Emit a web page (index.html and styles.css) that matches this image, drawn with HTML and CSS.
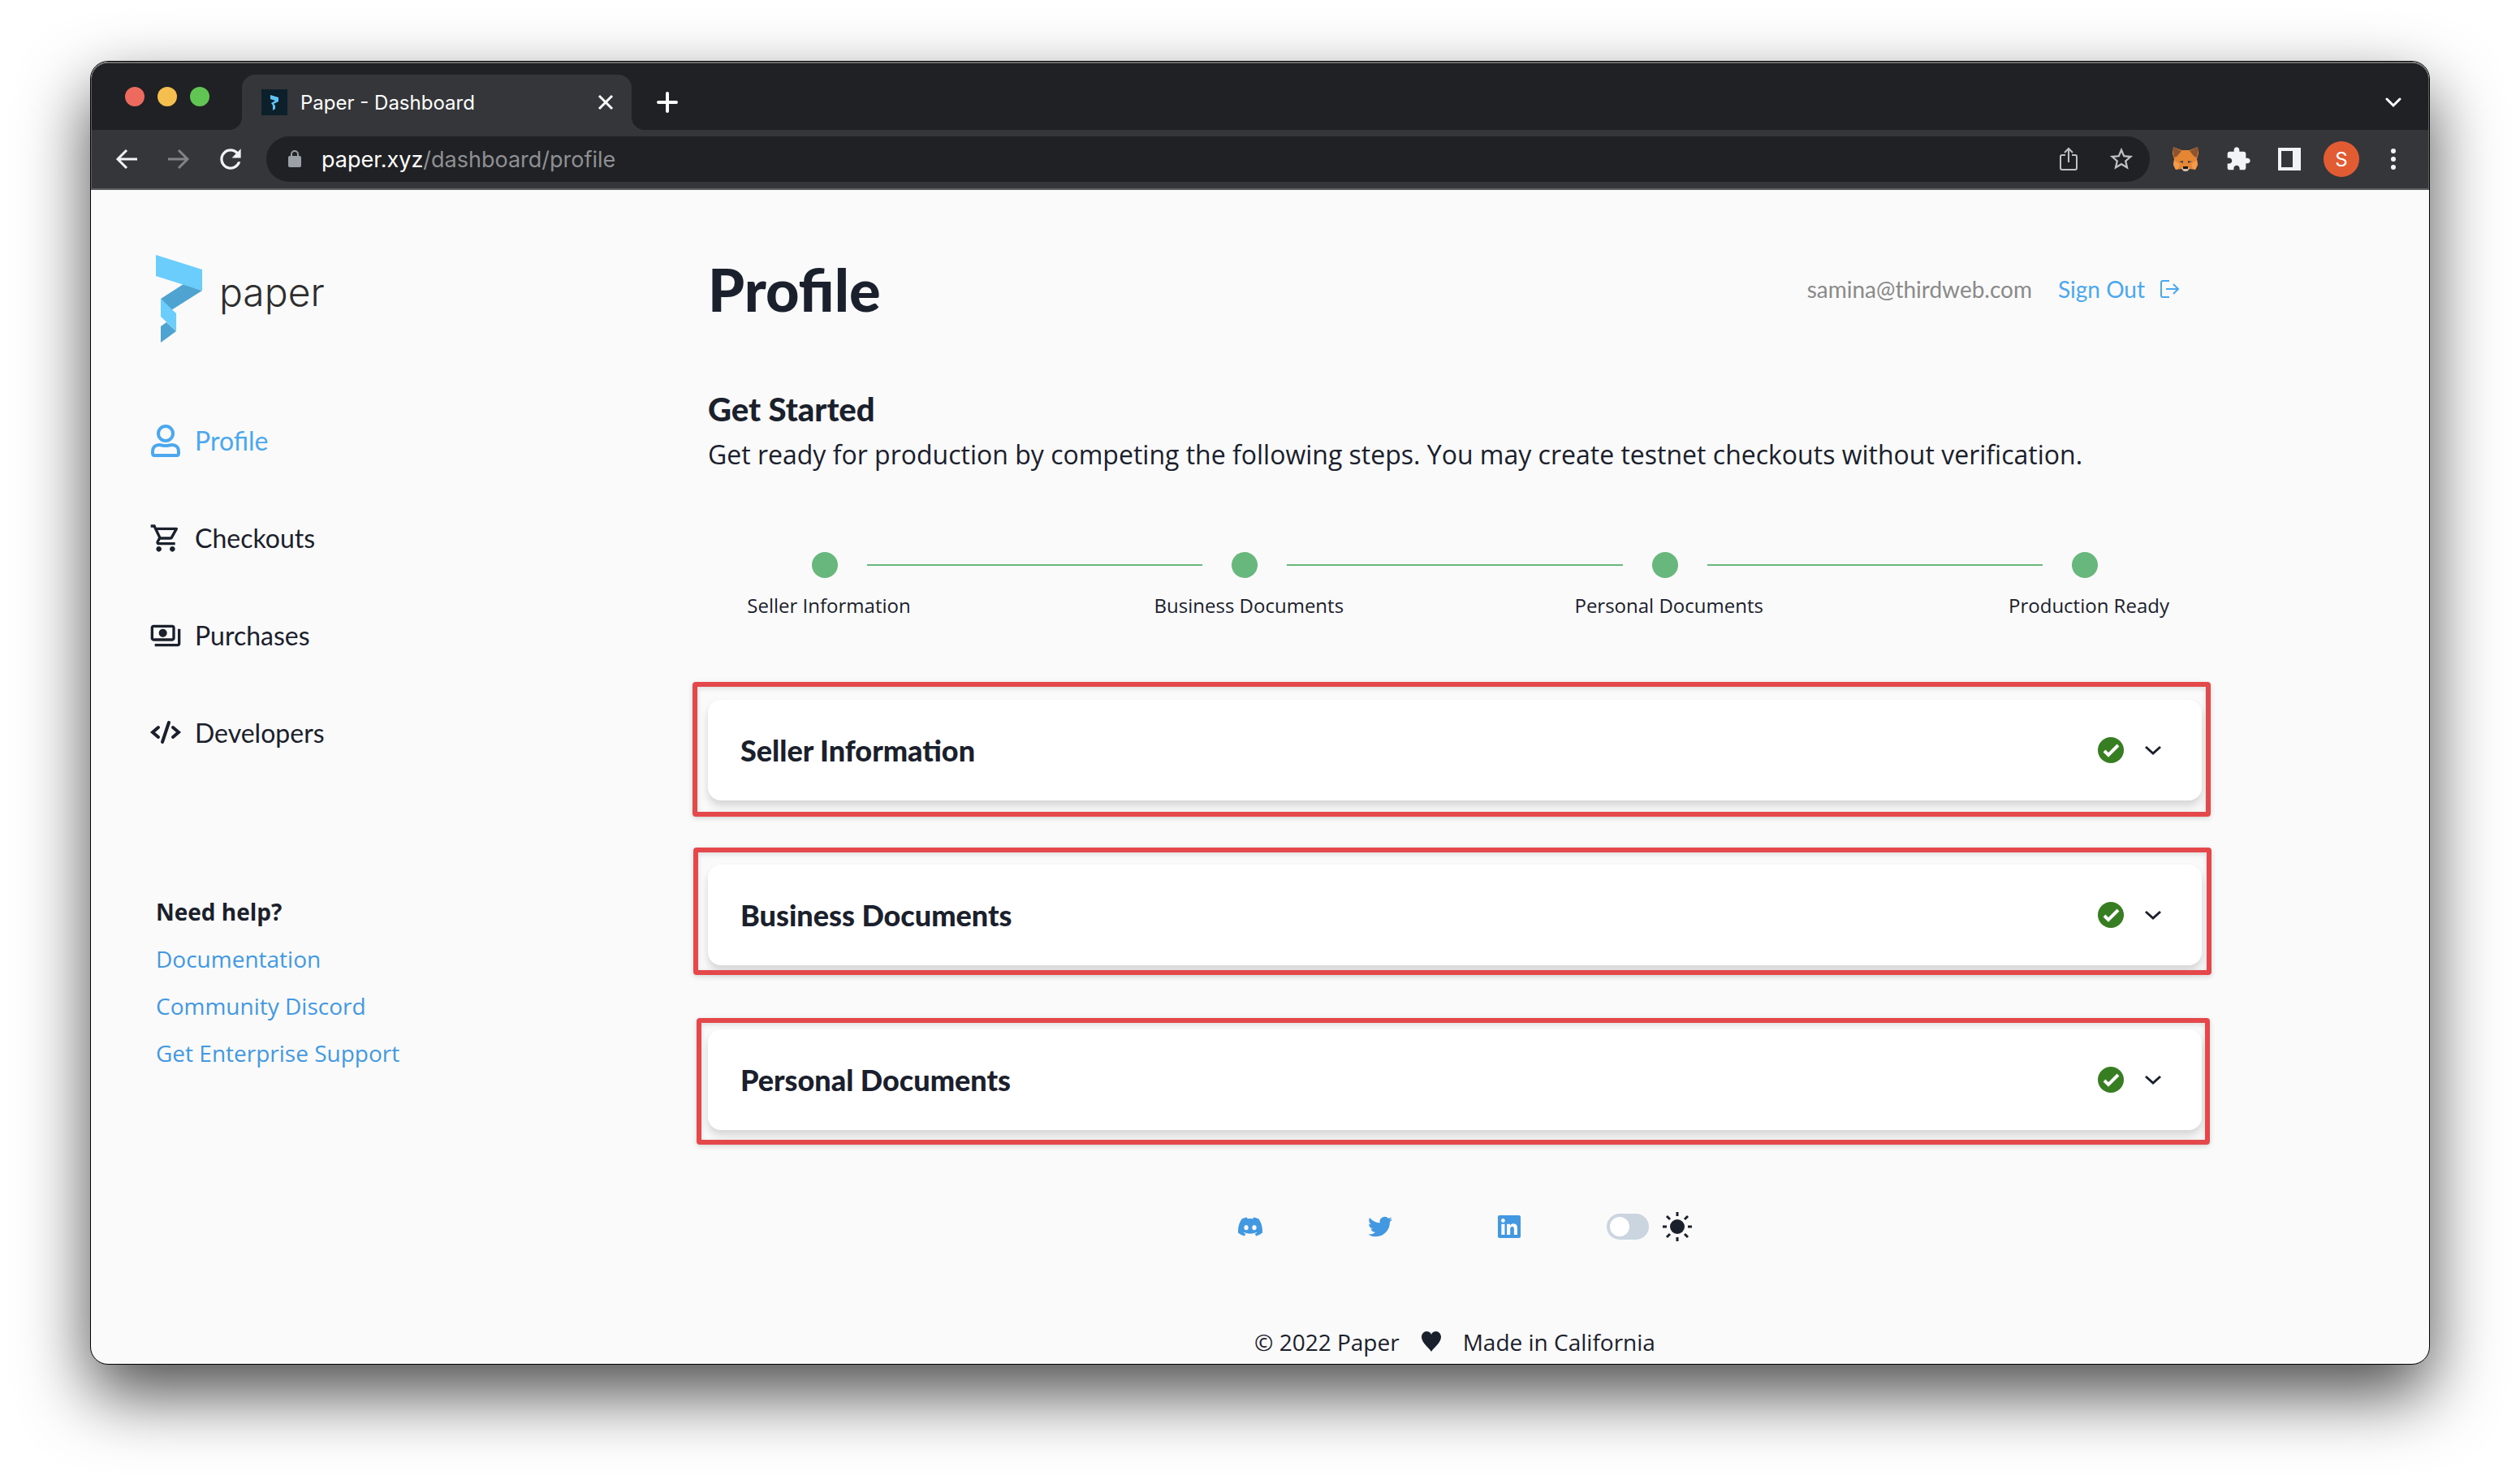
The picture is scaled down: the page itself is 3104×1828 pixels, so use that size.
FILE: index.html
```html
<!DOCTYPE html>
<html lang="en">
<head>
<meta charset="utf-8">
<title>Paper - Dashboard</title>
<link rel="stylesheet" href="styles.css">
</head>
<body>
<div class="window">
  <header class="chrome">
    <div class="tabstrip">
      <div class="lights">
        <button class="light light-close" aria-label="Close window"></button>
        <button class="light light-min" aria-label="Minimize window"></button>
        <button class="light light-max" aria-label="Zoom window"></button>
      </div>
      <div class="tab">
        <svg class="favicon" viewBox="0 0 32 32" aria-hidden="true"><rect width="32" height="32" fill="#0b202b"/><path d="M11 7l10 3v5l-6 3 2 2v4l-3 2v-6l-2-3 5-3-6-2z" fill="#5fc4f7"/></svg>
        <span class="tab-title">Paper - Dashboard</span>
        <button class="icon-btn" aria-label="Close tab"><svg width="20" height="20" viewBox="0 0 20 20"><path d="M2 2l16 16M18 2L2 18" stroke="#fff" stroke-width="3" fill="none"/></svg></button>
      </div>
      <button class="icon-btn new-tab" aria-label="New tab"><svg width="26" height="26" viewBox="0 0 26 26"><path d="M13 2v22M2 13h22" stroke="#fff" stroke-width="4" stroke-linecap="round"/></svg></button>
      <button class="icon-btn tab-search" aria-label="Search tabs"><svg width="20" height="14" viewBox="0 0 20 14"><path d="M2 3l8 8 8-8" stroke="#fff" stroke-width="3" fill="none" stroke-linecap="round"/></svg></button>
    </div>
    <div class="toolbar">
      <button class="icon-btn" aria-label="Back"><svg width="32" height="32" viewBox="0 0 32 32"><path d="M28 16H5M15 5L4 16l11 11" stroke="#f1f3f4" stroke-width="3" fill="none"/></svg></button>
      <button class="icon-btn" aria-label="Forward"><svg width="32" height="32" viewBox="0 0 32 32"><path d="M4 16h23M17 5l11 11-11 11" stroke="#828386" stroke-width="3" fill="none"/></svg></button>
      <button class="icon-btn" aria-label="Reload"><svg width="38" height="38" viewBox="0 0 24 24"><path d="M17.65 6.35A7.96 7.96 0 0012 4a8 8 0 107.73 10h-2.08A6 6 0 1112 6c1.66 0 3.14.69 4.22 1.78L13 11h7V4l-2.35 2.35z" fill="#f1f3f4"/></svg></button>
      <div class="omnibox">
        <svg class="lock" width="18" height="24" viewBox="0 0 18 24" aria-hidden="true"><rect x="1" y="8" width="16" height="14" rx="2" fill="#9aa0a6"/><path d="M5 9V6a4 4 0 018 0v3" stroke="#9aa0a6" stroke-width="2" fill="none"/></svg>
        <div class="url">paper.xyz<span class="url-path">/dashboard/profile</span></div>
        <button class="icon-btn" aria-label="Share"><svg width="32" height="32" viewBox="0 0 32 32"><path d="M12 11H8a2 2 0 00-2 2v14a2 2 0 002 2h16a2 2 0 002-2V13a2 2 0 00-2-2h-4M16 20V4M11 8l5-5 5 5" stroke="#bdc1c6" stroke-width="2" fill="none"/></svg></button>
        <button class="icon-btn" aria-label="Bookmark"><svg width="34" height="34" viewBox="0 0 24 24"><path d="M22 9.24l-7.19-.62L12 2 9.19 8.63 2 9.24l5.46 4.73L5.82 21 12 17.27 18.18 21l-1.63-7.03L22 9.24zM12 15.4l-3.76 2.27 1-4.28-3.32-2.88 4.38-.38L12 6.1l1.71 4.04 4.38.38-3.32 2.88 1 4.28L12 15.4z" fill="#bdc1c6"/></svg></button>
      </div>
      <div class="extensions">
        <button class="icon-btn" aria-label="MetaMask"><svg width="32" height="32" viewBox="0 0 32 32"><path d="M1 1l10 4h10l10-4 1 8-2 7 1 7-3 6-7-1-3 3h-4l-3-3-7 1-3-6 1-7L0 9z" fill="#e58635"/><path d="M1 1l10 5-6 7-3 1-1-5zM31 1l-10 5 6 7 3 1 1-5z" fill="#8c5430"/><path d="M2 17l7 5-2 6-3 1-3-6zM30 17l-7 5 2 6 3 1 3-6z" fill="#f29b4b"/><path d="M8 19l5-1v3zM24 19l-5-1v3z" fill="#40434a"/><path d="M11 27l3-1h4l3 1-3 4h-4z" fill="#cfbeb1"/><path d="M13 25h6v3h-6z" fill="#161616"/></svg></button>
        <button class="icon-btn" aria-label="Extensions"><svg width="32" height="32" viewBox="0 0 24 24"><path d="M20.500 11H19V7c0-1.100-.900-2-2-2h-4V3.500C13 2.120 11.880 1 10.500 1S8 2.120 8 3.500V5H4c-1.100 0-1.990.900-1.990 2v3.800H3.500c1.490 0 2.700 1.210 2.700 2.700s-1.210 2.700-2.700 2.700H2V20c0 1.100.900 2 2 2h3.800v-1.500c0-1.490 1.210-2.700 2.700-2.700 1.490 0 2.700 1.210 2.700 2.700V22H17c1.100 0 2-.900 2-2v-4h1.500c1.380 0 2.500-1.120 2.500-2.500S21.880 11 20.500 11z" fill="#f1f3f4"/></svg></button>
        <button class="icon-btn" aria-label="Side panel"><svg width="28" height="28" viewBox="0 0 28 28"><path d="M0 0h28v28H0zM4 4v20h14V4z" fill="#f1f3f4" fill-rule="evenodd"/></svg></button>
        <button class="avatar" aria-label="Account">S</button>
        <button class="icon-btn" aria-label="Menu"><svg width="8" height="28" viewBox="0 0 8 28"><g fill="#f1f3f4"><circle cx="4" cy="4" r="3"/><circle cx="4" cy="14" r="3"/><circle cx="4" cy="24" r="3"/></g></svg></button>
      </div>
    </div>
  </header>

  <div class="page">
    <aside class="sidebar">
      <a class="logo" href="#">
        <svg width="58" height="110" viewBox="0 0 58 110" aria-hidden="true"><path d="M34 36l23 8-38 24-13-14z" fill="#4fa3d1"/><path d="M0 0l57 18v26L0 26z" fill="#6bcdfb"/><path d="M13 83l12 11-19 14V88z" fill="#4fa3d1"/><path d="M6 54l19 18v22L6 76z" fill="#6bcdfb"/></svg>
        <span class="logo-text">paper</span>
      </a>
      <nav class="nav" aria-label="Main">
        <a class="nav-link nav-active" href="#"><svg width="40" height="44" viewBox="0 0 40 44" aria-hidden="true"><g fill="none" stroke="currentColor" stroke-width="4"><circle cx="20" cy="13" r="9"/><path d="M6 40h28c2 0 2-1 2-3v-2c0-5-3-8-8-8-3 0-4 1-8 1s-5-1-8-1c-5 0-8 3-8 8v2c0 2 0 3 2 3z"/></g></svg>Profile</a>
        <a class="nav-link" href="#"><svg width="40" height="40" viewBox="0 0 24 24" aria-hidden="true"><path fill="currentColor" d="M15.550 13c.750 0 1.410-.410 1.750-1.030l3.580-6.490A.996.996 0 0020.010 4H5.210l-.940-2H1v2h2l3.600 7.590-1.350 2.440C4.520 15.370 5.480 17 7 17h12v-2H7l1.100-2h7.450zM6.160 6h12.150l-2.760 5H8.530L6.160 6zM7 18c-1.100 0-1.990.900-1.990 2S5.900 22 7 22s2-.900 2-2-.900-2-2-2zm10 0c-1.100 0-1.990.900-1.990 2s.890 2 1.990 2 2-.900 2-2-.900-2-2-2z"/></svg>Checkouts</a>
        <a class="nav-link" href="#"><svg width="40" height="40" viewBox="0 0 24 24" aria-hidden="true"><path fill="currentColor" d="M19 14V6c0-1.100-.900-2-2-2H3c-1.100 0-2 .900-2 2v8c0 1.100.900 2 2 2h14c1.100 0 2-.900 2-2zm-2 0H3V6h14v8zm-7-7c-1.660 0-3 1.340-3 3s1.340 3 3 3 3-1.340 3-3-1.340-3-3-3zm13 0v11c0 1.100-.900 2-2 2H4v-2h17V7h2z"/></svg>Purchases</a>
        <a class="nav-link" href="#"><svg width="40" height="40" viewBox="0 0 40 40" aria-hidden="true"><path d="M11 13l-7 6 7 6M29 13l7 6-7 6M24 7l-8 24" fill="none" stroke="currentColor" stroke-width="4" stroke-linecap="round"/></svg>Developers</a>
      </nav>
      <section class="help">
        <h2 class="help-title">Need help?</h2>
        <a class="help-link" href="#">Documentation</a>
        <a class="help-link" href="#">Community Discord</a>
        <a class="help-link" href="#">Get Enterprise Support</a>
      </section>
    </aside>

    <div class="content">
      <main>
        <div class="page-head">
          <h1 class="title">Profile</h1>
          <div class="account">
            <span class="email">samina@thirdweb.com</span>
            <a class="signout" href="#">Sign Out<svg width="26" height="24" viewBox="0 0 26 24" aria-hidden="true"><path d="M12 2H4a2 2 0 00-2 2v16a2 2 0 002 2h8M8 12h15M17 6l6 6-6 6" fill="none" stroke="currentColor" stroke-width="2"/></svg></a>
          </div>
        </div>
        <h2 class="subtitle">Get Started</h2>
        <p class="lead">Get ready for production by competing the following steps. You may create testnet checkouts without verification.</p>
        <ol class="steps">
          <li class="step"><span class="dot"></span><span class="step-label">Seller Information</span></li>
          <li class="step-line" aria-hidden="true"></li>
          <li class="step"><span class="dot"></span><span class="step-label">Business Documents</span></li>
          <li class="step-line" aria-hidden="true"></li>
          <li class="step"><span class="dot"></span><span class="step-label">Personal Documents</span></li>
          <li class="step-line" aria-hidden="true"></li>
          <li class="step"><span class="dot"></span><span class="step-label">Production Ready</span></li>
        </ol>
        <div class="cards">
          <div class="card-wrap">
            <button class="card" aria-expanded="false">Seller Information<span class="card-icons"><svg width="32" height="32" viewBox="0 0 32 32" aria-label="Complete"><circle cx="16" cy="16" r="16" fill="#377d22"/><path d="M8 17l5 5 12-12" fill="none" stroke="#fff" stroke-width="4"/></svg><svg width="20" height="14" viewBox="0 0 20 14" aria-hidden="true"><path d="M1 3l9 8 9-8" fill="none" stroke="currentColor" stroke-width="3"/></svg></span></button>
            <span class="mark mark-seller"></span>
          </div>
          <div class="card-wrap">
            <button class="card" aria-expanded="false">Business Documents<span class="card-icons"><svg width="32" height="32" viewBox="0 0 32 32" aria-label="Complete"><circle cx="16" cy="16" r="16" fill="#377d22"/><path d="M8 17l5 5 12-12" fill="none" stroke="#fff" stroke-width="4"/></svg><svg width="20" height="14" viewBox="0 0 20 14" aria-hidden="true"><path d="M1 3l9 8 9-8" fill="none" stroke="currentColor" stroke-width="3"/></svg></span></button>
            <span class="mark mark-business"></span>
          </div>
          <div class="card-wrap">
            <button class="card" aria-expanded="false">Personal Documents<span class="card-icons"><svg width="32" height="32" viewBox="0 0 32 32" aria-label="Complete"><circle cx="16" cy="16" r="16" fill="#377d22"/><path d="M8 17l5 5 12-12" fill="none" stroke="#fff" stroke-width="4"/></svg><svg width="20" height="14" viewBox="0 0 20 14" aria-hidden="true"><path d="M1 3l9 8 9-8" fill="none" stroke="currentColor" stroke-width="3"/></svg></span></button>
            <span class="mark mark-personal"></span>
          </div>
        </div>
      </main>
      <footer class="footer">
        <div class="social">
          <a class="social-link" href="#" aria-label="Discord"><svg width="30" height="30" viewBox="0 0 24 24"><path fill="currentColor" d="M20.317 4.370a19.790 19.790 0 0 0-4.885-1.515.074.074 0 0 0-.079.037c-.210.375-.444.864-.608 1.250a18.270 18.270 0 0 0-5.487 0 12.640 12.640 0 0 0-.617-1.250.077.077 0 0 0-.079-.037A19.736 19.736 0 0 0 3.677 4.370a.070.070 0 0 0-.032.027C.533 9.046-.320 13.580.099 18.057a.082.082 0 0 0 .031.057 19.900 19.900 0 0 0 5.993 3.030.078.078 0 0 0 .084-.028 14.090 14.090 0 0 0 1.226-1.994.076.076 0 0 0-.041-.106 13.107 13.107 0 0 1-1.872-.892.077.077 0 0 1-.008-.128c.126-.094.252-.192.372-.291a.074.074 0 0 1 .077-.010c3.928 1.793 8.180 1.793 12.062 0a.074.074 0 0 1 .078.010c.120.098.246.198.373.292a.077.077 0 0 1-.006.127 12.299 12.299 0 0 1-1.873.892.077.077 0 0 0-.041.107c.360.698.772 1.362 1.225 1.993a.076.076 0 0 0 .084.028 19.839 19.839 0 0 0 6.002-3.030.077.077 0 0 0 .032-.054c.500-5.177-.838-9.674-3.549-13.660a.061.061 0 0 0-.031-.030zM8.020 15.330c-1.183 0-2.157-1.085-2.157-2.419 0-1.333.956-2.419 2.157-2.419 1.210 0 2.176 1.096 2.157 2.420 0 1.333-.956 2.418-2.157 2.418zm7.975 0c-1.183 0-2.157-1.085-2.157-2.419 0-1.333.955-2.419 2.157-2.419 1.210 0 2.176 1.096 2.157 2.420 0 1.333-.946 2.418-2.157 2.418z"/></svg></a>
          <a class="social-link" href="#" aria-label="Twitter"><svg width="30" height="30" viewBox="0 0 24 24"><path fill="currentColor" d="M23.953 4.570a10 10 0 0 1-2.825.775 4.958 4.958 0 0 0 2.163-2.723c-.951.555-2.005.959-3.127 1.184a4.920 4.920 0 0 0-8.384 4.482C7.690 8.095 4.067 6.130 1.640 3.162a4.822 4.822 0 0 0-.666 2.475c0 1.710.870 3.213 2.188 4.096a4.904 4.904 0 0 1-2.228-.616v.060a4.923 4.923 0 0 0 3.946 4.827 4.996 4.996 0 0 1-2.212.085 4.936 4.936 0 0 0 4.604 3.417 9.867 9.867 0 0 1-6.102 2.105c-.390 0-.779-.023-1.170-.067a13.995 13.995 0 0 0 7.557 2.209c9.053 0 13.998-7.496 13.998-13.985 0-.210 0-.420-.015-.630A9.935 9.935 0 0 0 24 4.590z"/></svg></a>
          <a class="social-link" href="#" aria-label="LinkedIn"><svg width="28" height="32" viewBox="0 0 448 512"><path fill="currentColor" d="M416 32H31.900C14.300 32 0 46.500 0 64.300v383.400C0 465.500 14.300 480 31.900 480H416c17.600 0 32-14.500 32-32.300V64.300c0-17.800-14.400-32.300-32-32.300zM135.400 416H69V202.200h66.500V416zm-33.200-243c-21.300 0-38.500-17.300-38.500-38.500S80.900 96 102.200 96c21.200 0 38.500 17.300 38.500 38.500 0 21.300-17.200 38.500-38.500 38.500zm282.100 243h-66.400V312c0-24.800-.5-56.700-34.500-56.700-34.600 0-39.900 27-39.900 54.900V416h-66.400V202.200h63.700v29.200h.9c8.900-16.800 30.600-34.500 62.900-34.500 67.200 0 79.700 44.300 79.700 101.900V416z"/></svg></a>
          <label class="theme"><input class="switch" type="checkbox" aria-label="Dark mode"><svg width="36" height="36" viewBox="0 0 36 36" aria-hidden="true"><circle cx="18" cy="18" r="9" fill="currentColor"/><path d="M18 0v5M18 31v5M0 18h5M31 18h5M5 5l4 4M27 27l4 4M31 5l-4 4M9 27l-4 4" stroke="currentColor" stroke-width="3"/></svg></label>
        </div>
        <p class="legal"><span>© 2022 Paper</span><svg width="24" height="26" viewBox="0 0 24 26" aria-hidden="true"><path d="M12 25C9 20 0 14 0 7c0-4 3-7 6-7s5 1 6 4c1-3 3-4 6-4s6 3 6 7c0 7-9 13-12 18z" fill="currentColor"/></svg><span>Made in California</span></p>
      </footer>
    </div>
  </div>
</div>
</body>
</html>
```
FILE: styles.css
```css
* { box-sizing: border-box; }

body {
  margin: 0;
  padding: 75px 111px 147px;
  background: #fff;
  color: #1a202c;
  font-family: "Open Sans", sans-serif;
}

h1, h2, p, ol { margin: 0; padding: 0; }
a { color: inherit; text-decoration: none; }
button { border: 0; padding: 0; background: none; color: inherit; font: inherit; cursor: pointer; }
svg { display: block; flex: none; }

.window {
  border: 1px solid #000;
  border-radius: 22px;
  overflow: hidden;
  background: #fafafa;
  box-shadow: 0 36px 84px rgba(0, 0, 0, 0.7);
}

/* Browser chrome */
.chrome {
  color: #fff;
  font-family: Inter, sans-serif;
  border-radius: 21px 21px 0 0;
  background: #202124;
  border: 1px solid #5f6164;
  border-top: 2px solid #6a6c6b;
  border-bottom: 0;
}
.tabstrip { display: flex; align-items: flex-end; height: 82px; padding: 0 33px 0 41px; }
.lights { display: flex; gap: 16px; margin: 0 40px 29px 0; }
.light { width: 24px; height: 24px; border-radius: 50%; }
.light-close { background: #ed6a5e; }
.light-min { background: #f5bf4f; }
.light-max { background: #61c554; }
.icon-btn { display: grid; place-items: center; }
.tab {
  position: relative;
  display: flex;
  align-items: center;
  width: 480px;
  height: 68px;
  padding: 0 22px 0 24px;
  border-radius: 16px 16px 0 0;
  background: #35363a;
}
.tab::before, .tab::after {
  content: "";
  position: absolute;
  bottom: 0;
  width: 16px;
  height: 16px;
}
.tab::before { right: 100%; background: radial-gradient(circle at 0 0, transparent 16px, #35363a 16px); }
.tab::after { left: 100%; background: radial-gradient(circle at 100% 0, transparent 16px, #35363a 16px); }
.favicon { width: 32px; height: 32px; }
.tab-title { flex: 1; padding-left: 16px; font-size: 24px; }
.new-tab { height: 68px; margin-left: 31px; }
.tab-search { height: 68px; margin-left: auto; }

.toolbar {
  display: flex;
  align-items: center;
  height: 74px;
  padding: 0 39px 0 28px;
  gap: 30px;
  background: #35363a;
  border-bottom: 2px solid #5f6064;
}
.omnibox {
  flex: 1;
  display: flex;
  align-items: center;
  gap: 32px;
  height: 56px;
  margin-left: -5px;
  padding: 0 18px 0 26px;
  border-radius: 28px;
  background: #202124;
}
.url { flex: 1; margin-left: -8px; font-size: 27px; }
.url-path { color: #8e9093; }
.extensions { display: flex; align-items: center; gap: 33px; margin-left: -2px; }
.avatar { width: 44px; height: 44px; margin: 0 5px 0 -5px; border-radius: 50%; background: #e25c33; font-size: 24px; }

/* Page */
.page { display: flex; }
.sidebar { flex: 0 0 760px; padding: 80px 0 0 72px; }
.logo { display: flex; gap: 20px; padding-left: 8px; color: #2e2e2e; }
.logo-text { font: 300 48px/92px Inter, sans-serif; }
.nav { display: flex; flex-direction: column; gap: 76px; margin-top: 97px; }
.nav-link {
  display: flex;
  align-items: center;
  gap: 16px;
  height: 44px;
  font: 32px/44px Lato, sans-serif;
}
.nav-active { color: #4ba8ee; }
.help { display: flex; flex-direction: column; align-items: flex-start; gap: 18px; margin: 178px 0 0 8px; }
.help-title, .help-link { font-size: 28px; line-height: 40px; }
.help-title { font-weight: 700; }
.help-link { color: #4299e1; }

.content { flex: 1; max-width: 1840px; margin-right: 279px; padding-top: 74px; }
.page-head { display: flex; align-items: center; justify-content: space-between; padding-right: 26px; }
.title { font: 900 72px/96px Lato, sans-serif; }
.account { display: flex; gap: 32px; font: 28px/40px Lato, sans-serif; }
.email { color: #8a8a8a; }
.signout { display: flex; align-items: center; gap: 18px; color: #4ba8ee; }
.subtitle { margin-top: 76px; font: 900 40px/48px Lato, sans-serif; }
.lead { margin-top: 8px; font-size: 32px; line-height: 48px; }

.steps { display: flex; justify-content: space-between; margin: 96px 128px 0; list-style: none; }
.step { display: flex; flex-direction: column; align-items: center; width: 32px; }
.dot { width: 32px; height: 32px; border-radius: 50%; background: #68b77d; }
.step-label { margin-top: 18px; padding-left: 10px; font-size: 24px; line-height: 32px; white-space: nowrap; }
.step-line { flex: 1; height: 2px; margin: 15px 36px 0; background: #68b77d; }

.cards { display: flex; flex-direction: column; gap: 79px; margin-top: 100px; }
.card-wrap { position: relative; }
.card {
  display: flex;
  align-items: center;
  justify-content: space-between;
  width: 100%;
  height: 124px;
  padding: 0 50px 0 40px;
  border-radius: 16px;
  background: #fff;
  box-shadow: 0 8px 12px rgba(0, 0, 0, 0.1), 0 4px 8px rgba(0, 0, 0, 0.06);
  font: 900 36px/48px Lato, sans-serif;
  text-align: left;
}
.card-icons { display: flex; align-items: center; gap: 26px; }

/* Red callout frames drawn over the cards */
.mark {
  position: absolute;
  border: 6px solid #e5484a;
  border-radius: 4px;
  box-shadow: 0 2px 6px rgba(0, 0, 0, 0.15), inset 0 2px 6px rgba(0, 0, 0, 0.12);
  pointer-events: none;
}
.mark-seller { inset: -22px -11px -20px -19px; }
.mark-business { inset: -21px -12px -12px -18px; }
.mark-personal { inset: -14px -10px -18px -14px; }

.footer { display: flex; flex-direction: column; align-items: center; margin-top: 101px; }
.social { display: flex; align-items: center; gap: 130px; height: 36px; padding-left: 24px; }
.social-link { color: #4299e1; }
.theme { display: flex; align-items: center; gap: 17px; margin-left: -24px; }
.switch {
  appearance: none;
  width: 52px;
  height: 32px;
  margin: 0;
  padding: 4px;
  border-radius: 16px;
  background: #cbd5e0;
}
.switch::before { content: ""; display: block; width: 24px; height: 24px; border-radius: 50%; background: #fff; }
.legal { display: flex; align-items: center; gap: 27px; margin-top: 104px; padding-bottom: 7px; font-size: 28px; line-height: 40px; }
```
